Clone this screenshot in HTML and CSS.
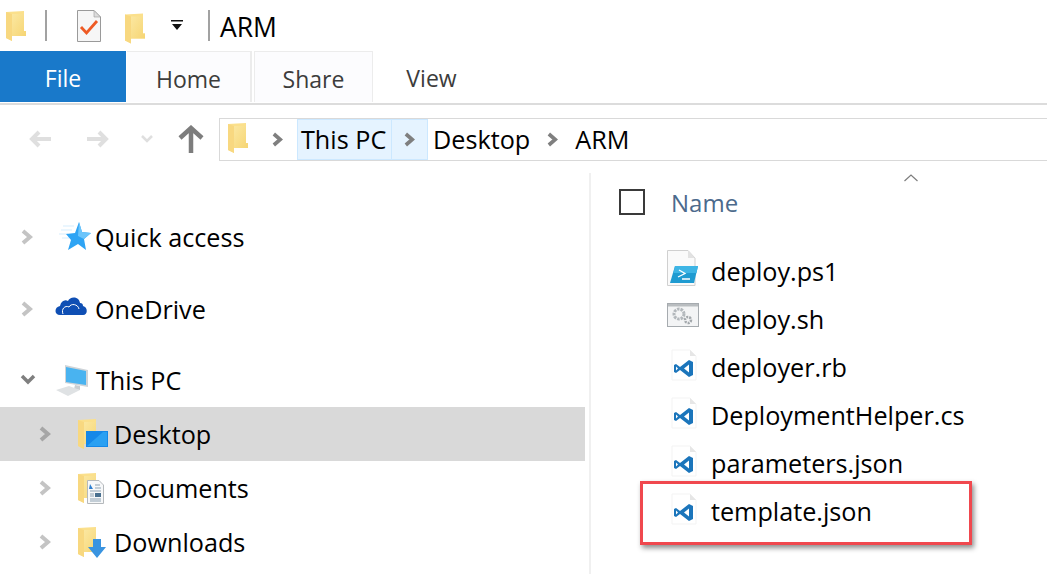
FILE: index.html
```html
<!DOCTYPE html>
<html lang="en">
<head>
<meta charset="utf-8">
<title>ARM</title>
<link rel="stylesheet" href="styles.css">
</head>
<body>
<svg class="defs" width="0" height="0">
  <defs>
    <linearGradient id="fg" x1="0" y1="0" x2="1" y2="1"><stop offset="0" stop-color="#fbe7a0"/><stop offset="1" stop-color="#f6d573"/></linearGradient>
    <symbol id="folder" viewBox="0 0 20 30">
      <path d="M0 1 L18 0 V20 H20 V25 H6 V30 L0 27Z" fill="#fbe08c"/>
      <path d="M6 3 H18 V20 H20 V25 H6Z" fill="url(#fg)"/>
      <path d="M0 1 L6 3 V30 L0 27Z" fill="#f8d880"/>
    </symbol>
    <symbol id="vsfile" viewBox="0 0 26 32">
      <path d="M1 1 H19 L25 7 V31 H1Z" fill="#fff" stroke="#f3f3f3"/>
      <path d="M19 1 V7 H25Z" fill="#e6e6e6"/>
      <path d="M18 11 L22 13 V26 L18 28 L9 21 L5 24 L3 23 V16 L5 15 L9 18Z M18 15.500 L13 19.500 L18 23.500Z M5 17.500 V21.500 L7 19.500Z" fill="#1b75bb" fill-rule="evenodd"/>
    </symbol>
    <symbol id="chev" viewBox="0 0 12 16">
      <path d="M2 2 L9 8 L2 14" fill="none" stroke="currentColor" stroke-width="4"/>
    </symbol>
  </defs>
</svg>
<div class="window">
  <header class="titlebar">
    <svg class="ic-folder"><use href="#folder"/></svg>
    <span class="sep sep-a"></span>
    <svg class="ic-check" viewBox="0 0 24 32">
      <path d="M.5.5 H17 L23.500 7 V31.500 H.5Z" fill="#f6f6f6" stroke="#9a9a9a"/>
      <path d="M17 .5 V7 H23.500Z" fill="#dcdcdc" stroke="#9a9a9a" stroke-width=".6"/>
      <path d="M4 17 L9.500 23 L20 11" fill="none" stroke="#ee5a24" stroke-width="2.800"/>
    </svg>
    <svg class="ic-folder ic-folder-b"><use href="#folder"/></svg>
    <svg class="ic-drop" viewBox="0 0 12 11"><path d="M0 0 H12 V1.500 H0Z M1 4 H11 L6 10Z" fill="#111"/></svg>
    <span class="sep sep-b"></span>
    <span class="title">ARM</span>
  </header>
  <nav class="tabs">
    <div class="tab tab-file">File</div>
    <div class="tab tab-home">Home</div>
    <div class="tab tab-share">Share</div>
    <div class="tab tab-view">View</div>
  </nav>
  <div class="addressrow">
    <div class="navbtns">
      <svg class="nav-back" viewBox="0 0 22 18"><path d="M10 2 L3 9 L10 16 M3 9 H22" fill="none" stroke="#dfdfdf" stroke-width="4"/></svg>
      <svg class="nav-fwd" viewBox="0 0 22 18"><path d="M12 2 L19 9 L12 16 M19 9 H0" fill="none" stroke="#dfdfdf" stroke-width="4"/></svg>
      <svg class="nav-down" viewBox="0 0 12 8"><path d="M1 1 L6 6 L11 1" fill="none" stroke="#dfdfdf" stroke-width="2.500"/></svg>
      <svg class="nav-up" viewBox="0 0 26 28"><path d="M2 13 L13 3 L24 13 M13 3 V28" fill="none" stroke="#7d7d7d" stroke-width="4.500"/></svg>
    </div>
    <div class="address">
      <svg class="ic-folder ic-folder-c"><use href="#folder"/></svg>
      <svg class="crumb-chev chev-first"><use href="#chev"/></svg>
      <div class="crumb-hot">
        <span class="crumb-hot-text">This PC</span>
        <span class="crumb-hot-arrow"><svg class="crumb-chev"><use href="#chev"/></svg></span>
      </div>
      <span class="crumb crumb-desktop">Desktop</span>
      <svg class="crumb-chev chev-mid"><use href="#chev"/></svg>
      <span class="crumb">ARM</span>
    </div>
  </div>
  <main class="body">
    <aside class="tree">
      <div class="node node-gap">
        <svg class="tw tw-light"><use href="#chev"/></svg>
        <svg class="tree-ic ic-star" viewBox="0 0 32 30">
          <path d="M4 4 H15 M2 8 H13 M0 12 H9 M3 16 H10" stroke="#d6eefd" stroke-width="1.200"/>
          <path d="M20 0 L23 10 L32 11 L25 17 L27 28 L19 22 L9 28 L12 18 L7 12 L16 11Z" fill="#2ea4f4"/>
          <path d="M20 0 L23 10 L32 11 L25 17 L19 14Z" fill="#6cc5fb"/>
        </svg>
        <span>Quick access</span>
      </div>
      <div class="node node-gap">
        <svg class="tw tw-light"><use href="#chev"/></svg>
        <svg class="tree-ic ic-cloud" viewBox="0 0 32 20">
          <path d="M5 19 C-1 19 -1 11 5 10 C6 5 10 3 13 5 C15 0 24 0 25 7 C27 7 28 8 28 10 C33 11 33 19 28 19Z" fill="#0f4fb4"/>
          <path d="M8 18 C6 13 10 9 14 11 C16 7 23 8 24 13" fill="none" stroke="#fff" stroke-width="1"/>
        </svg>
        <span>OneDrive</span>
      </div>
      <div class="node">
        <svg class="tw tw-open" viewBox="0 0 16 12"><path d="M2 2 L8 8 L14 2" fill="none" stroke="#7f7f7f" stroke-width="3.500"/></svg>
        <svg class="tree-ic ic-pc" viewBox="0 0 34 32">
          <path d="M9 1 L32 6 V23 L9 19Z" fill="#cfd4d8"/>
          <path d="M10 3 L30 7 V21 L10 18Z" fill="#49b3f0"/>
          <path d="M19 21 L24 22 V26 L18 25Z" fill="#c9ced2"/>
          <path d="M0 26 L13 22 L24 26 L12 32Z" fill="#dfe2e4"/>
        </svg>
        <span>This PC</span>
      </div>
      <div class="node node-sub node-selected">
        <svg class="tw tw-mid"><use href="#chev"/></svg>
        <span class="sub-ic">
          <svg class="ic-folder ic-folder-d"><use href="#folder"/></svg>
          <svg class="badge badge-desk" viewBox="0 0 22 16"><rect width="22" height="16" fill="#1588e8"/><path d="M1 15 L17 1 H21 V15Z" fill="#2aa0f2"/></svg>
        </span>
        <span>Desktop</span>
      </div>
      <div class="node node-sub">
        <svg class="tw tw-light"><use href="#chev"/></svg>
        <span class="sub-ic">
          <svg class="ic-folder ic-folder-d"><use href="#folder"/></svg>
          <svg class="badge badge-doc" viewBox="0 0 17 24">
            <path d="M.5.5 H12 L16.500 5 V23.500 H.5Z" fill="#f7f8f9" stroke="#b5b9bc"/>
            <path d="M3 4 L6 9 H2Z" fill="#2f7fd0"/>
            <path d="M8 5 H13 M8 8 H14 M3 11 H14 M3 19 H14 M3 21 H14" stroke="#8fa3b3"/>
            <rect x="8" y="13" width="6" height="4" fill="#49708f"/>
            <path d="M3 14 H7 M3 16 H7" stroke="#8fa3b3"/>
          </svg>
        </span>
        <span>Documents</span>
      </div>
      <div class="node node-sub">
        <svg class="tw tw-light"><use href="#chev"/></svg>
        <span class="sub-ic">
          <svg class="ic-folder ic-folder-d"><use href="#folder"/></svg>
          <svg class="badge badge-dl" viewBox="0 0 18 19"><path d="M5 0 H13 V8 H18 L9 19 L0 8 H5Z" fill="#3a94e0"/></svg>
        </span>
        <span>Downloads</span>
      </div>
    </aside>
    <section class="files">
      <div class="sorter"><svg class="sort-caret" viewBox="0 0 14 8"><path d="M.5 7 L7 1 L13.500 7" fill="none" stroke="#7d7d7d" stroke-width="1.200"/></svg></div>
      <div class="colhead">
        <span class="checkbox"></span>
        <span class="colname">Name</span>
      </div>
      <ul class="list">
        <li class="file">
          <svg class="file-ic file-ic-ps" viewBox="0 0 32 36">
            <path d="M.5.5 H21 L28 8 V35.500 H.5Z" fill="#fafafa" stroke="#d0d0d0"/>
            <path d="M21 .5 V8 H28Z" fill="#e2e2e2"/>
            <path d="M8 16 H31 L27 33 H3Z" fill="#1f9bd1"/>
            <path d="M8 16 H31 L29.500 23 H6.500Z" fill="#3eb5e5"/>
            <path d="M12 20 L18 23.500 L11 27 M15 29 H23" fill="none" stroke="#fff" stroke-width="1.300"/>
          </svg>
          <span>deploy.ps1</span>
        </li>
        <li class="file">
          <svg class="file-ic file-ic-sh" viewBox="0 0 32 24">
            <rect x=".5" y=".5" width="31" height="23" fill="#f3f4f5" stroke="#a6abaf"/>
            <rect x="1" y="1" width="30" height="2.500" fill="#b9bdc0"/>
            <circle cx="12" cy="11" r="5" fill="none" stroke="#b3b8bc" stroke-width="3" stroke-dasharray="2.500 1"/>
            <circle cx="21" cy="17" r="3" fill="none" stroke="#a2a7ab" stroke-width="2.500" stroke-dasharray="2 1"/>
          </svg>
          <span>deploy.sh</span>
        </li>
        <li class="file"><svg class="file-ic file-ic-vs"><use href="#vsfile"/></svg><span>deployer.rb</span></li>
        <li class="file"><svg class="file-ic file-ic-vs"><use href="#vsfile"/></svg><span>DeploymentHelper.cs</span></li>
        <li class="file"><svg class="file-ic file-ic-vs"><use href="#vsfile"/></svg><span>parameters.json</span></li>
        <li class="file file-marked">
          <svg class="file-ic file-ic-vs"><use href="#vsfile"/></svg><span>template.json</span>
          <span class="callout"></span>
        </li>
      </ul>
    </section>
  </main>
</div>
</body>
</html>
```

FILE: styles.css
```css
* { box-sizing: border-box; }
html, body { margin: 0; padding: 0; }
body {
  width: 1047px;
  height: 574px;
  overflow: hidden;
  background: #fff;
  color: #000;
  font-family: "Open Sans", "Noto Sans", sans-serif;
  font-size: 25.2px;
}
.defs { display: block; height: 0; }
.window { display: flex; flex-direction: column; height: 574px; }

/* title bar */
.titlebar { display: flex; align-items: center; height: 51px; padding-left: 6px; }
.ic-folder { width: 20px; height: 30px; flex: none; }
.sep { width: 2px; height: 31px; background: #a2a2a2; flex: none; }
.sep-a { margin-left: 19px; }
.ic-check { width: 24px; height: 32px; margin-left: 30px; flex: none; }
.ic-folder-b { margin-left: 24px; margin-top: 6px; height: 31px; }
.ic-drop { width: 12px; height: 11px; margin-left: 26px; flex: none; }
.sep-b { margin-left: 25px; }
.title { margin-left: 10px; padding-top: 4px; font-size: 26.500px; line-height: 51px; }

/* ribbon tabs */
.tabs {
  display: flex;
  height: 54px;
  border-bottom: 2px solid #dcdcdc;
  padding-bottom: 1px;
  color: #3c3c3c;
  font-size: 23px;
}
.tab { display: flex; align-items: center; justify-content: center; height: 51px; padding-top: 3px; }
.tab-file { width: 126px; background: #1979ca; color: #fff; }
.tab-home { width: 125px; margin-left: 1px; background: #fcfcfe; border-top: 1px solid #ececec; border-right: 2px solid #ececec; }
.tab-share { width: 119px; margin-left: 2px; background: #fcfcfe; border-top: 1px solid #ececec; border-left: 1px solid #ececec; border-right: 1px solid #ececec; }
.tab-view { width: 117px; }

/* address row */
.addressrow { display: flex; align-items: center; height: 56px; padding-top: 12px; }
.navbtns { display: flex; align-items: center; width: 219px; flex: none; }
.nav-back { width: 22px; height: 18px; margin-left: 29px; }
.nav-fwd { width: 22px; height: 18px; margin-left: 36px; }
.nav-down { width: 12px; height: 8px; margin-left: 32px; }
.nav-up { width: 26px; height: 28px; margin-left: 25px; }
.address {
  display: flex;
  align-items: center;
  flex: 1;
  height: 43px;
  padding-left: 8px;
  border: 1px solid #d9d9d9;
  border-right: 0;
}
.ic-folder-c { height: 30px; margin-bottom: 3px; }
.crumb-chev { width: 11px; height: 15px; color: #7f7f7f; flex: none; }
.chev-first { margin-left: 24px; }
.crumb-hot {
  display: flex;
  height: 41px;
  margin-left: 14px;
  background: #e5f3ff;
  border: 1px solid #cce8ff;
}
.crumb-hot-text { display: flex; align-items: center; padding: 0 3px; width: 93px; white-space: nowrap; }
.crumb-hot-arrow { display: flex; align-items: center; justify-content: center; width: 36px; border-left: 1px solid #cce8ff; }
.crumb-desktop { margin-left: 5px; }
.chev-mid { margin: 0 17px; }

/* body */
.body { display: flex; flex: 1; min-height: 0; }
.tree { width: 585px; flex: none; padding-top: 49px; }
.node { display: flex; align-items: center; height: 54px; white-space: nowrap; }
.node-gap { margin-bottom: 18px; }
.node-gap + .node-gap { margin-bottom: 17px; }
.tw { flex: none; width: 12px; height: 16px; margin-left: 21px; }
.tw-light { color: #c4c4c4; }
.tw-mid { color: #a6a6a6; }
.tw-open { width: 20px; height: 12px; margin-left: 18px; }
.tree-ic { flex: none; }
.ic-star { width: 32px; height: 30px; margin: 0 4px 0 26px; }
.ic-cloud { width: 32px; height: 20px; margin: 0 8px 6px 22px; }
.ic-pc { width: 34px; height: 32px; margin: 0 6px 0 18px; }
.node-sub { padding-left: 17px; }
.node-selected { background: #d9d9d9; }
.sub-ic { position: relative; display: block; width: 33px; height: 30px; margin: 0 3px 0 27px; flex: none; }
.ic-folder-d { display: block; }
.badge { position: absolute; }
.badge-desk { left: 8px; top: 12px; width: 22px; height: 16px; }
.badge-doc { left: 9px; top: 7px; width: 17px; height: 24px; }
.badge-dl { left: 10px; top: 12px; width: 18px; height: 19px; }
.node-sub .tw { margin-left: 22px; }

/* file list */
.files { flex: 1; border-left: 2px solid #f0f0f0; margin-left: 4px; padding-left: 28px; margin-top: 12px; }
.sorter { height: 0; position: relative; }
.sort-caret { position: absolute; left: 285px; top: 1px; width: 14px; height: 8px; }
.colhead { display: flex; align-items: center; height: 28px; margin-top: 15px; }
.checkbox { width: 26px; height: 26px; border: 2px solid #3a3a3a; flex: none; }
.colname { margin-left: 26px; color: #4c6a8c; font-size: 24px; }
.list { list-style: none; margin: 31px 0 0; padding: 0 0 0 48px; }
.file { display: flex; align-items: center; height: 48px; white-space: nowrap; position: relative; }
.file-ic { flex: none; margin-right: 12px; width: 32px; height: 36px; }
.file-ic-ps { margin-bottom: 6px; }
.file-ic-sh { height: 24px; margin-bottom: 8px; }
.file-ic-vs { width: 26px; height: 32px; margin-left: 4px; margin-right: 14px; margin-bottom: 4px; }
.callout {
  position: absolute;
  left: -27px;
  top: -6px;
  width: 332px;
  height: 64px;
  border: 3px solid #f0484e;
  box-shadow: 2px 3px 5px rgba(0, 0, 0, .45);
}
```
